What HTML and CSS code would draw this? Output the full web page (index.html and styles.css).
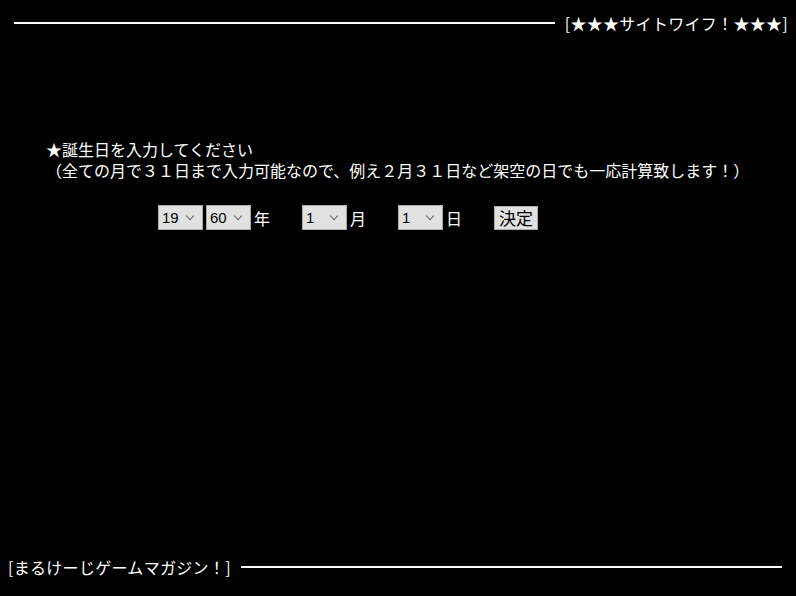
FILE: index.html
```html
<!DOCTYPE html>
<html lang="ja">
<head>
    <meta charset="UTF-8">
    <title>サイトワイフ！</title>
    <link rel="stylesheet" href="styles.css">
</head>
<body>
    <div class="topbar">
        <div class="rule"></div>
        <span class="site-title">[★★★サイトワイフ！★★★]</span>
    </div>

    <div class="intro">
        <p>★誕生日を入力してください</p>
        <p>（全ての月で３１日まで入力可能なので、例え２月３１日など架空の日でも一応計算致します！）</p>
    </div>

    <form class="date-row" onsubmit="return false;">
        <span class="select-wrap">
            <select name="century">
                <option>19</option>
                <option>20</option>
            </select>
        </span>
        <span class="select-wrap gap">
            <select name="year">
                <option>60</option>
            </select>
        </span>
        <span class="unit">年</span>

        <span class="select-wrap">
            <select name="month">
                <option>1</option>
            </select>
        </span>
        <span class="unit">月</span>

        <span class="select-wrap">
            <select name="day">
                <option>1</option>
            </select>
        </span>
        <span class="unit">日</span>

        <button type="submit">決定</button>
    </form>

    <div class="bottombar">
        <span class="site-title">[まるけーじゲームマガジン！]</span>
        <div class="rule"></div>
    </div>

    <script>
        // fill year / month / day lists
        const year = document.querySelector("select[name=year]");
        for (let i = 61; i < 100; i++) {
            year.add(new Option(String(i).padStart(2, "0")));
        }
        const month = document.querySelector("select[name=month]");
        for (let i = 2; i <= 12; i++) month.add(new Option(i));
        const day = document.querySelector("select[name=day]");
        for (let i = 2; i <= 31; i++) day.add(new Option(i));
    </script>
</body>
</html>
```

FILE: styles.css
```css
html, body {
    height: 100%;
}
body {
    margin: 0;
    padding: 14px 8px 20px 8px;
    box-sizing: border-box;
    background-color: #000;
    color: #fff;
    font-family: "Noto Sans CJK JP", "DejaVu Sans", sans-serif;
    font-size: 16px;
    line-height: 18px;
    display: flex;
    flex-direction: column;
}
.topbar, .bottombar {
    display: flex;
    align-items: center;
    gap: 10px;
}
.topbar {
    padding-left: 6px;
}
.bottombar {
    margin-top: auto;
    padding-right: 6px;
}
.rule {
    flex: 1;
    height: 2px;
    background-color: #fff;
}
.site-title {
    white-space: nowrap;
    letter-spacing: 0.3px;
}
.intro {
    margin-top: 109px;
    padding-left: 38px;
}
.intro p {
    margin: 0;
    height: 18px;
    line-height: 16px;
}
.intro p + p {
    margin-top: 3px;
}
.date-row {
    margin-top: 25px;
    padding-left: 150px;
    display: flex;
    align-items: center;
}
.select-wrap {
    position: relative;
    display: inline-block;
    height: 25px;
}
.select-wrap.gap {
    margin-left: 3px;
}
.select-wrap::after {
    content: "";
    position: absolute;
    right: 10px;
    top: 8px;
    width: 5px;
    height: 5px;
    border-right: 1px solid #666;
    border-bottom: 1px solid #666;
    transform: rotate(45deg);
    pointer-events: none;
}
select {
    appearance: none;
    -webkit-appearance: none;
    width: 45px;
    height: 25px;
    margin: 0;
    padding: 0 0 0 3px;
    border: 1px solid #a9a9a9;
    border-radius: 0;
    background-color: #e1e1e1;
    color: #000;
    font-family: "Liberation Sans", sans-serif;
    font-size: 15px;
}
.unit {
    margin: 0 32px 0 3px;
}
button {
    width: 44px;
    height: 24px;
    margin: 0;
    padding: 0;
    border: 1px solid #adadad;
    outline: 1px solid #e1e1e1;
    outline-offset: -2px;
    background-color: #e1e1e1;
    color: #000;
    font-family: "Noto Sans CJK JP", sans-serif;
    font-size: 17px;
    line-height: 20px;
    cursor: pointer;
}
```
